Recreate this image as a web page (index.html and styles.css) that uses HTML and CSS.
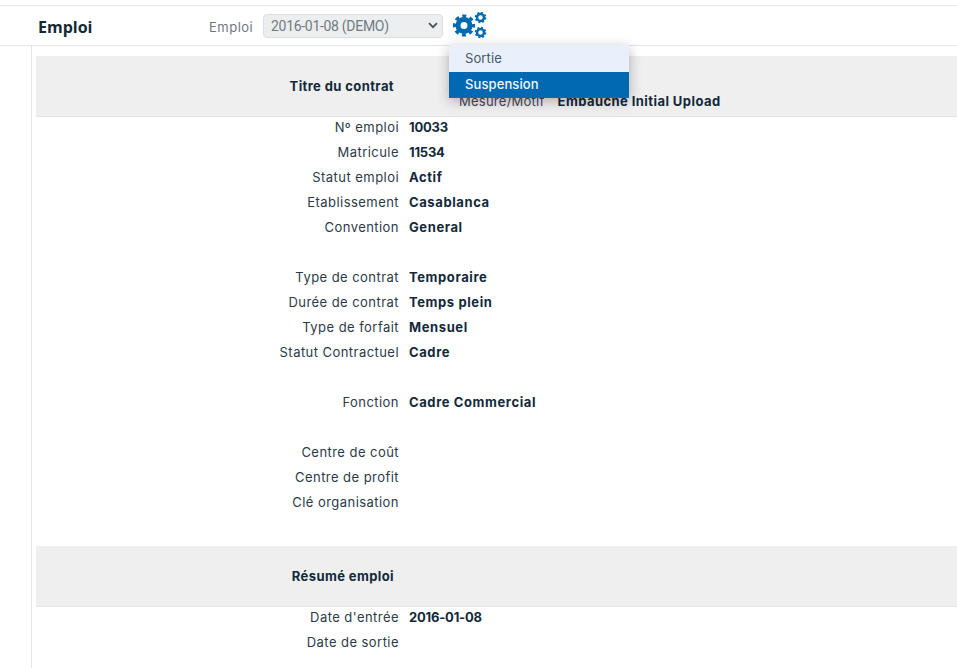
FILE: index.html
```html
<!DOCTYPE html>
<html lang="fr">
<head>
<meta charset="utf-8">
<title>Emploi</title>
<link rel="stylesheet" href="styles.css">
</head>
<body>
<header class="topbar">
  <h1 class="page-title">Emploi</h1>
  <label class="job-label">Emploi</label>
  <div class="job-select"><span>2016-01-08 (DEMO)</span>
    <svg class="chev" width="10" height="7" viewBox="0 0 10 7"><path d="M1 1.2l4 4 4-4" fill="none" stroke="#48525c" stroke-width="1.8"/></svg>
  </div>
  <div class="gear-wrap">
    <svg class="gears" width="35" height="27" viewBox="0 0 35 27">
      <g fill="none" stroke="#0069b1">
        <circle cx="12" cy="13.5" r="6" stroke-width="5"/>
        <circle cx="12" cy="13.5" r="9.6" stroke-width="3" stroke-dasharray="4 3.54" stroke-dashoffset="2"/>
        <circle cx="28.5" cy="5.5" r="3.5" stroke-width="2.5"/>
        <circle cx="28.5" cy="5.5" r="5" stroke-width="1.6" stroke-dasharray="1.95 1.98"/>
        <circle cx="28.5" cy="20.5" r="3.5" stroke-width="2.5"/>
        <circle cx="28.5" cy="20.5" r="5" stroke-width="1.6" stroke-dasharray="1.95 1.98"/>
      </g>
    </svg>
    <ul class="menu">
      <li class="menu-item">Sortie</li>
      <li class="menu-item active">Suspension</li>
    </ul>
  </div>
</header>
<main class="content">
  <section class="band">
    <h2 class="band-title">Titre du contrat</h2>
    <div class="band-side"><span class="side-label">Mesure/Motif</span><b class="value">Embauche Initial Upload</b></div>
  </section>
  <dl class="rows">
    <div class="row"><dt>Nº emploi</dt><dd class="num">10033</dd></div>
    <div class="row"><dt>Matricule</dt><dd class="num">11534</dd></div>
    <div class="row"><dt>Statut emploi</dt><dd>Actif</dd></div>
    <div class="row"><dt>Etablissement</dt><dd>Casablanca</dd></div>
    <div class="row"><dt>Convention</dt><dd>General</dd></div>
    <div class="row gap"></div>
    <div class="row"><dt>Type de contrat</dt><dd>Temporaire</dd></div>
    <div class="row"><dt>Durée de contrat</dt><dd>Temps plein</dd></div>
    <div class="row"><dt>Type de forfait</dt><dd>Mensuel</dd></div>
    <div class="row"><dt>Statut Contractuel</dt><dd>Cadre</dd></div>
    <div class="row gap"></div>
    <div class="row"><dt>Fonction</dt><dd>Cadre Commercial</dd></div>
    <div class="row gap"></div>
    <div class="row"><dt>Centre de coût</dt><dd></dd></div>
    <div class="row"><dt>Centre de profit</dt><dd></dd></div>
    <div class="row"><dt>Clé organisation</dt><dd></dd></div>
  </dl>
  <section class="band second">
    <h2 class="band-title">Résumé emploi</h2>
  </section>
  <dl class="rows">
    <div class="row"><dt>Date d'entrée</dt><dd class="num">2016-01-08</dd></div>
    <div class="row"><dt>Date de sortie</dt><dd></dd></div>
  </dl>
</main>
</body>
</html>
```
FILE: styles.css
```css
* { box-sizing: border-box; }
html, body { margin: 0; height: 100%; overflow: hidden; background: #fff; }
body {
  padding-top: 5px;
  font-family: Inter, "Liberation Sans", sans-serif;
  font-size: 13px;
  color: #13293a;
}
.topbar {
  display: flex;
  align-items: center;
  height: 41px;
  border-top: 1px solid #e2e4e6;
  border-bottom: 1px solid #e2e4e6;
  padding-left: 38px;
}
.page-title {
  margin: 0;
  padding-top: 2px;
  width: 171px;
  font: 700 16px "Open Sans", sans-serif;
  color: #102a36;
}
.job-label {
  width: 54px;
  padding-top: 2px;
  font: 400 13px Inter, sans-serif;
  letter-spacing: .5px;
  color: #6f7880;
}
.job-select {
  width: 180px;
  height: 24px;
  background: #eceeef;
  border: 1px solid #dcdfe2;
  border-radius: 4px;
  padding-left: 7px;
  padding-right: 4px;
  display: flex;
  align-items: center;
  justify-content: space-between;
  font: 400 14px Roboto, sans-serif;
  letter-spacing: -.3px;
  color: #717b83;
}
.gear-wrap { position: relative; margin-left: 9px; height: 27px; }
.gears { display: block; }
.menu {
  position: absolute;
  left: -3px;
  top: 33px;
  z-index: 5;
  width: 180px;
  margin: 0;
  padding: 0;
  list-style: none;
  box-shadow: 0 3px 12px rgba(0, 0, 0, .28);
}
.menu-item {
  height: 27px;
  line-height: 26px;
  padding-left: 16px;
  background: #e9f0fc;
  color: #45596a;
  font-size: 13px;
  letter-spacing: .1px;
}
.menu-item.active { height: 26px; line-height: 25px; background: #0069b1; color: #f2f7fb; font-weight: 500; }
.content {
  margin-left: 31px;
  padding: 10px 0 0 4px;
  border-left: 1px solid #e2e4e6;
  height: 622px;
}
.band {
  position: relative;
  height: 61px;
  background: #efefef;
  border-bottom: 1px solid #e2e4e6;
  display: flex;
  align-items: center;
  margin-right: -2px;
}
.band.second { margin-top: 29px; }
.band-title {
  margin: 0;
  width: 358px;
  text-align: right;
  font: 700 13px Inter, sans-serif;
  letter-spacing: .4px;
  color: #13293a;
}
.band-side {
  position: absolute;
  left: 423px;
  top: 37px;
  display: flex;
  gap: 13px;
  line-height: 16px;
}
.side-label { color: #3c4a5a; letter-spacing: .25px; }
.value { font-weight: 700; letter-spacing: .43px; }
.rows { margin: 0; }
.row {
  display: flex;
  height: 25px;
  padding-top: 2px;
  line-height: 16px;
  gap: 10px;
}
.row dt { width: 363px; text-align: right; color: #2b3a49; letter-spacing: .45px; }
.row dd { margin: 0; font-weight: 700; color: #13293a; letter-spacing: .6px; }
.row dd.num { letter-spacing: -.2px; }
```
